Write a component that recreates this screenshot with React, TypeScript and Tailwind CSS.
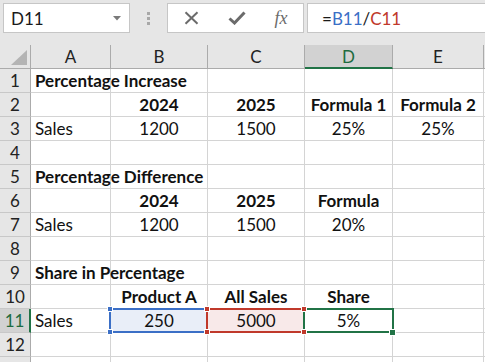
import React from "react";

const colW = ["w-[31px]", "w-[80px]", "w-[97px]", "w-[97px]", "w-[88px]", "w-[91px]"];

type Cell = { t?: string; b?: boolean; a?: "l" | "c"; bg?: string };

const rows: Cell[][] = [
  [{ t: "Percentage Increase", b: true, a: "l" }],
  [{}, { t: "2024", b: true }, { t: "2025", b: true }, { t: "Formula 1", b: true }, { t: "Formula 2", b: true }],
  [{ t: "Sales", a: "l" }, { t: "1200" }, { t: "1500" }, { t: "25%" }, { t: "25%" }],
  [],
  [{ t: "Percentage Difference", b: true, a: "l" }],
  [{}, { t: "2024", b: true }, { t: "2025", b: true }, { t: "Formula", b: true }],
  [{ t: "Sales", a: "l" }, { t: "1200" }, { t: "1500" }, { t: "20%" }],
  [],
  [{ t: "Share in Percentage", b: true, a: "l" }],
  [{}, { t: "Product A", b: true }, { t: "All Sales", b: true }, { t: "Share", b: true }],
  [{ t: "Sales", a: "l" }, { t: "250", bg: "bg-[#e9eef8]" }, { t: "5000", bg: "bg-[#f8e9e9]" }, { t: "5%" }],
  [],
  [],
];

const font = { fontFamily: "Lato, 'Liberation Sans', sans-serif" };

export default function App() {
  return (
    <div className="relative w-[485px] h-[362px] overflow-hidden bg-white text-[17px] text-[#111]" style={font}>
      {/* formula bar */}
      <div className="h-[45px] bg-[#e6e6e6] flex items-start pt-[3px]">
        <div className="ml-[3px] w-[127px] h-[30px] border border-[#c6c6c6] bg-white flex items-center justify-between pl-[7px] pr-[8px]">
          <span className="leading-[23px] text-[#1a1a1a] mt-[1px]">D11</span>
          <svg width="8" height="5" viewBox="0 0 8 5"><path d="M0 0h8L4 4.5z" fill="#7a7a7a" /></svg>
        </div>
        <div className="w-[37px] h-[30px] flex flex-col items-center justify-center gap-[2px]">
          <div className="w-[3px] h-[3px] bg-[#a8a8a8]" />
          <div className="w-[3px] h-[3px] bg-[#a8a8a8]" />
          <div className="w-[3px] h-[3px] bg-[#a8a8a8]" />
        </div>
        <div className="w-[137px] h-[30px] border border-[#c6c6c6] bg-white flex items-center">
          <div className="w-[45px] flex justify-center pl-[2px]">
            <svg width="15" height="14" viewBox="0 0 15 14">
              <path d="M1.5 1.2L13.5 12.8M13.5 1.2L1.5 12.8" stroke="#6b6b6b" strokeWidth="2" />
            </svg>
          </div>
          <div className="w-[46px] flex justify-center pl-[1px]">
            <svg width="18" height="14" viewBox="0 0 18 14">
              <path d="M1.5 7.5L6.5 12L16.5 1.5" stroke="#6b6b6b" strokeWidth="3" fill="none" />
            </svg>
          </div>
          <div className="w-[44px] flex justify-center">
            <span className="italic text-[#6b6b6b] text-[18px] leading-[20px]" style={{ fontFamily: "'Liberation Serif', serif" }}>fx</span>
          </div>
        </div>
        <div className="ml-[3px] flex-1 h-[30px] border border-r-0 border-[#c6c6c6] bg-white flex items-center pl-[14px]">
          <span className="leading-[23px] mt-[1px] text-[#1a1a1a]">
            =<span className="text-[#3b6fc6]">B11</span>/<span className="text-[#c0392b]">C11</span>
          </span>
        </div>
      </div>

      {/* column headers */}
      <div className="flex h-[24px]">
        <div className={`${colW[0]} h-full bg-[#e6e6e6] border-r border-b border-[#ababab] relative`}>
          <svg className="absolute left-[11px] top-[5px]" width="16" height="15" viewBox="0 0 16 15">
            <path d="M16 0V15H0z" fill="#b4b4b4" />
          </svg>
        </div>
        {["A", "B", "C", "D", "E"].map((c, i) => (
          <div
            key={c}
            className={`${colW[i + 1]} h-full border-r ${
              c === "D"
                ? "bg-[#d2d2d2] border-b-2 border-b-[#217346] text-[#1e6b40] border-r-[#ababab]"
                : "bg-[#e6e6e6] border-b border-[#ababab] text-[#222]"
            } flex justify-center leading-[23px]`}
          >
            {c}
          </div>
        ))}
        <div className="flex-1 h-full bg-[#e6e6e6] border-b border-[#ababab]" />
      </div>

      {/* rows */}
      {rows.map((r, ri) => {
        const sel = ri === 10;
        return (
          <div key={ri} className="flex h-[24px]">
            <div
              className={`${colW[0]} h-full border-b border-[#c8c8c8] flex justify-center leading-[23px] ${
                sel ? "bg-[#d2d2d2] border-r-2 border-r-[#217346] text-[#1e6b40]" : "bg-[#e6e6e6] border-r border-r-[#ababab] text-[#222]"
              }`}
            >
              {ri < 12 ? ri + 1 : ""}
            </div>
            {[0, 1, 2, 3, 4].map((ci) => {
              const cell = r[ci] || {};
              return (
                <div
                  key={ci}
                  className={`${colW[ci + 1]} h-full border-r border-b border-[#d4d4d4] leading-[23px] whitespace-nowrap ${
                    cell.bg || ""
                  } ${cell.a === "l" ? "pl-[4px] overflow-visible" : "text-center"}`}
                >
                  <span className={cell.b ? "font-bold" : ""}>{cell.t}</span>
                </div>
              );
            })}
            <div className="flex-1 h-full border-b border-[#d4d4d4]" />
          </div>
        );
      })}

      {/* reference boxes */}
      <div className="absolute left-[109px] top-[308px] w-[99px] h-[25px] border-2 border-[#3b6fc6]" />
      <div className="absolute left-[206px] top-[308px] w-[99px] h-[25px] border-2 border-[#c0392b]" />
      <div className="absolute left-[303px] top-[308px] w-[91px] h-[25px] border-2 border-[#217346]" />
      {/* handles */}
      <div className="absolute left-[107px] top-[306px] w-[6px] h-[6px] bg-[#3b6fc6] border border-white" />
      <div className="absolute left-[107px] top-[329px] w-[6px] h-[6px] bg-[#3b6fc6] border border-white" />
      <div className="absolute left-[204px] top-[306px] w-[6px] h-[6px] bg-[#c0392b] border border-white" />
      <div className="absolute left-[204px] top-[329px] w-[6px] h-[6px] bg-[#c0392b] border border-white" />
      <div className="absolute left-[301px] top-[306px] w-[6px] h-[6px] bg-[#c0392b] border border-white" />
      <div className="absolute left-[301px] top-[329px] w-[6px] h-[6px] bg-[#c0392b] border border-white" />
      <div className="absolute left-[389px] top-[329px] w-[7px] h-[7px] bg-[#217346] border border-white" />
    </div>
  );
}
